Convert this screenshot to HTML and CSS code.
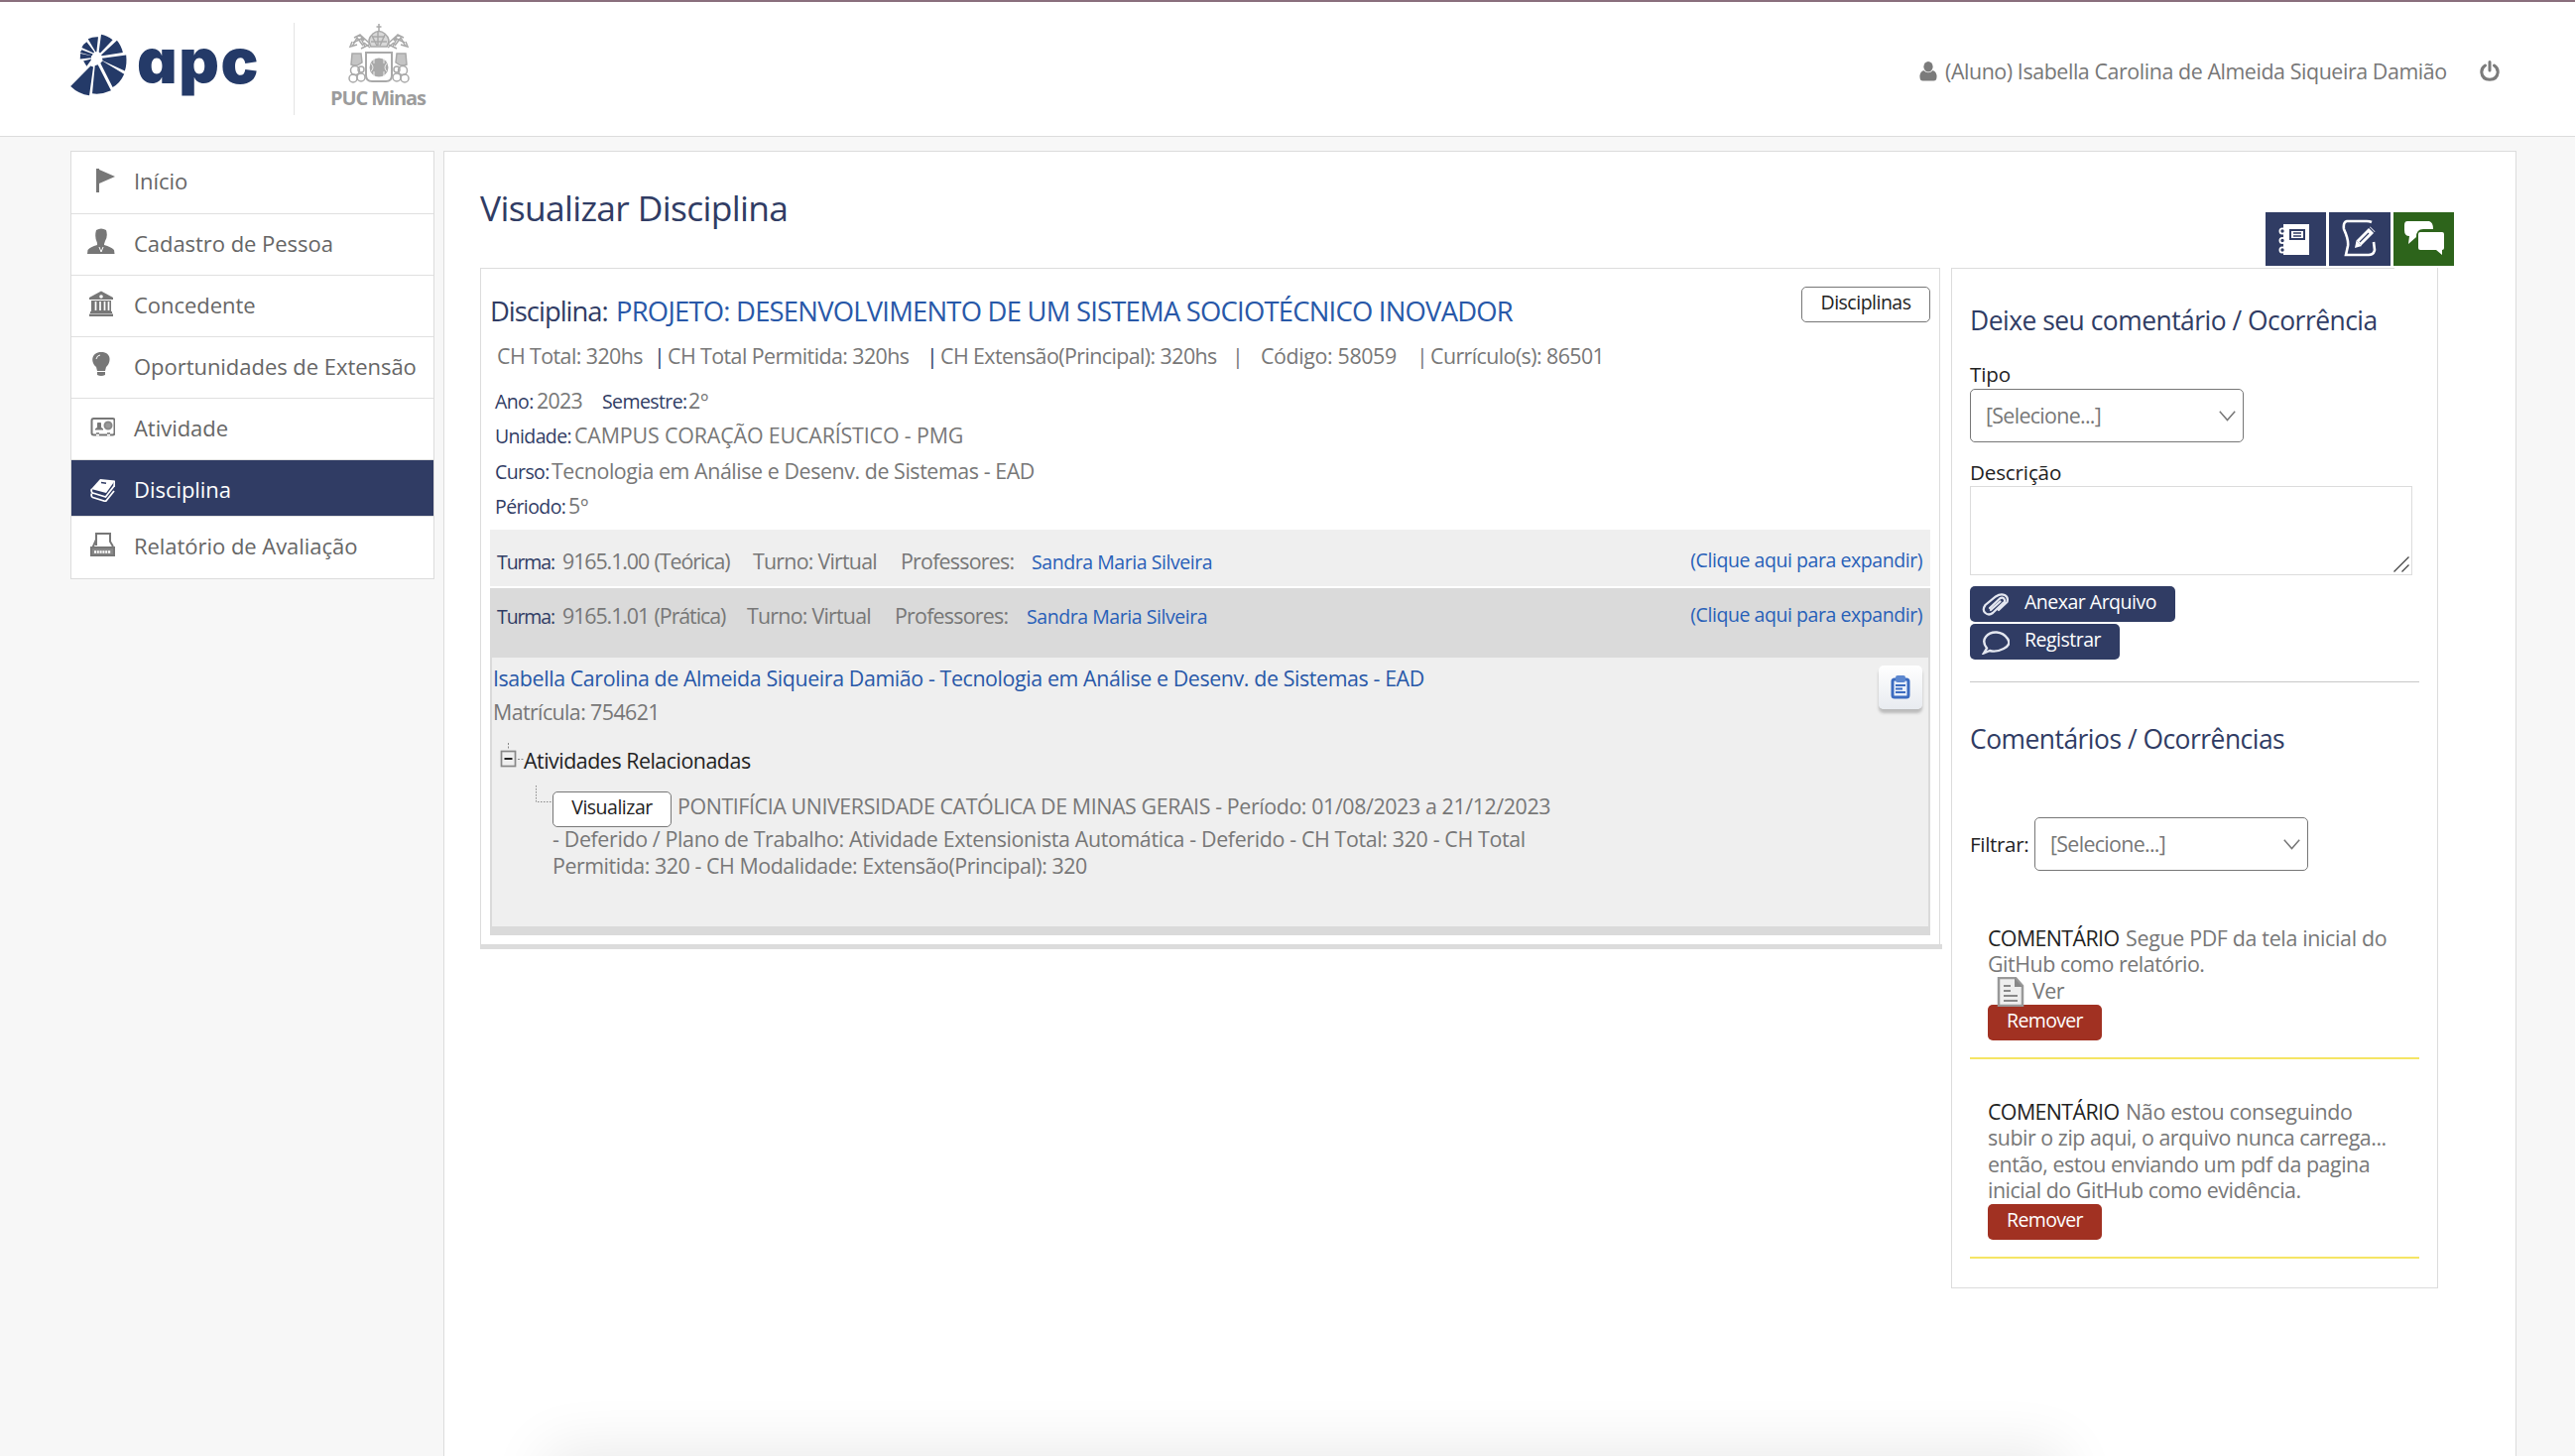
FILE: index.html
```html
<!DOCTYPE html>
<html lang="pt-BR">
<head>
<meta charset="utf-8">
<title>APC - Visualizar Disciplina</title>
<link rel="stylesheet" href="styles.css">
</head>
<body>
<header class="topbar">
  <svg class="fan" viewBox="210 103 177 190"><path d="M213 263L274 201L282 204L270 291Q238 287 213 263ZM279 285L287 200L296 197L336 276Q308 289 279 285ZM341 266L304 193L310 186L376 226Q364 253 341 266ZM309 178L382 168Q385 196 378 216L311 185ZM306 168L354 123Q367 138 372 160L309 170ZM299 158L306 105Q325 108 341 122L303 162ZM289 158L266 119Q280 112 297 113L292 158ZM283 162L247 145Q252 134 262 128L285 158ZM278 170L242 160L247 152L281 165ZM276 176L242 180L243 163L276 170ZM275 184L262 202L252 186L276 180Z"/></svg>
  <span class="apc">apc</span>
  <div class="crest">
    <svg width="64" height="62" viewBox="0 0 64 62" fill="none" stroke="#a9a9a9" stroke-width="1.5"><path d="M32 1v8M29.500 4h5"/><path d="M24 24Q19 17 26 11Q32 6 38 11Q45 17 40 24Z" fill="#d8d8d8"/><path d="M25 13l5 10M31 9v14M38 12l-5 11M24 19h16M26 14h12"/><path d="M7 15l6-3 4 6M13 12l10 9M17 20l6 5M10 22L3 24l2-5M6 20l8-4 4 8M57 15l-6-3-4 6M51 12l-10 9M47 20l-6 5M54 22l7 2-2-5M58 20l-8-4-4 8"/><path d="M5 24l5-9 6 8M14 26l8-4M59 24l-5-9-6 8M50 26l-8-4"/><path d="M19 30h26v23q0 6-6 6H25q-6 0-6-6Z" stroke-width="2"/><circle cx="32" cy="45" r="9.500" fill="#a9a9a9" stroke="none"/><path d="M27 36v5M27 49v5M37 36v5M37 49v5M24 41q4 4 0 8M40 41q-4 4 0 8" stroke="#eee" stroke-width="1"/><path d="M5 31h9l1 9q-6 5-11 2ZM59 31h-9l-1 9q6 5 11 2Z" fill="#c4c4c4"/><circle cx="8" cy="48" r="4.500"/><circle cx="6" cy="56" r="4"/><circle cx="14" cy="55" r="4"/><circle cx="14" cy="47" r="3"/><circle cx="56" cy="48" r="4.500"/><circle cx="58" cy="56" r="4"/><circle cx="50" cy="55" r="4"/><circle cx="50" cy="47" r="3"/></svg>
    <span class="puc">PUC Minas</span>
  </div>
  <div class="user">
    <svg class="user-icon" width="18" height="20" viewBox="0 0 18 20" fill="#7b7b7b"><ellipse cx="9" cy="5.200" rx="4.600" ry="5.200"/><path d="M4.300 9Q9 13.500 13.700 9Q17.800 10.500 17.500 16Q17.300 19.500 14.500 19.500H3.500Q.7 19.500.5 16Q.2 10.500 4.300 9Z"/></svg>
    <span class="user-name">(Aluno) Isabella Carolina de Almeida Siqueira Damião</span>
    <svg class="power" width="20" height="21" viewBox="0 0 20 21" fill="none" stroke="#7b7b7b" stroke-width="3" stroke-linecap="round"><path d="M5.500 5Q1.500 7.500 1.800 12Q2.500 19 10 19.300Q17.500 19 18.200 12Q18.500 7.500 14.500 5M10 1.500v8.500"/></svg>
  </div>
</header>
<div class="page">
<nav class="menu">
  <a class="item"><svg class="ico" viewBox="0 0 28 28"><path d="M9 3h3v24H9ZM12 4l16 7-16 7Z"/></svg><span>Início</span></a>
  <a class="item"><svg class="ico" viewBox="0 0 28 28"><path d="M9 2q5-3 10 0q2 6-1 11l-1 3v1q7 2 10 5l.5 4H0l.5-4Q3 19 10 17v-2Q7 9 9 2Z"/><path d="M12 19l2 5 2-5" fill="none" stroke="#fff"/></svg><span>Cadastro de Pessoa</span></a>
  <a class="item"><svg class="ico" viewBox="0 0 28 28"><path d="M2 8L14 1.500 26 8v2H2ZM4 11h20v11H4ZM3 22h22v2H3ZM2 24.500h24V27H2Z"/><path d="M8.500 12v9M13 12v9M17.500 12v9M21.500 12v9" stroke="#fff" stroke-width="1.700"/><circle cx="14" cy="7" r="1.800" fill="#fff"/></svg><span>Concedente</span></a>
  <a class="item"><svg class="ico" viewBox="0 0 28 28"><path d="M14 1c11 0 10 11 5 15l-1 4h-8l-1-4C3 11 4 1 14 1ZM10 21h8v3q-4 2-8 0Z"/><path d="M9 8q1-4 4-4" stroke="#fff" fill="none"/></svg><span>Oportunidades de Extensão</span></a>
  <a class="item"><svg class="ico line" viewBox="0 0 28 28"><rect x="4.500" y="6" width="23" height="16.500" rx="2"/><path d="M9 22.500h3M20 22.500h3" stroke="#fff"/><path d="M9 21h3M20 21h3" stroke-width="1.500"/><path d="M8 17h8l-2.500-2v-4.500h-3V15ZM12 11v5" fill="#777" stroke-width="1"/><circle cx="21" cy="13" r="3.500" fill="#999" stroke="#888"/></svg><span>Atividade</span></a>
  <a class="item active"><svg class="ico" viewBox="0 0 28 28"><path d="M13 5l15 1.500-9 12.500L4 15Z" fill="#fff"/><path d="M14 8.500l5 .7" stroke="#303c64" stroke-width="1.500"/><path d="M4.500 15q-1 3 1 4l13 4L27 12M4.500 19.500q-1 3 1 4l13 4L27 17M27.500 7l-.5 6" fill="none" stroke="#fff" stroke-width="1.800"/></svg><span>Disciplina</span></a>
  <a class="item"><svg class="ico line" viewBox="0 0 28 28"><path d="M9 15V3h14v8l3 5M9 9l-4 9h22" /><path d="M4 17h23v8H4Z" fill="#888"/><path d="M7 21.500h17" stroke="#fff" stroke-width="2.500" stroke-dasharray="2 .8"/></svg><span>Relatório de Avaliação</span></a>
</nav>
<main class="main">
  <section class="left">
    <h1>Visualizar Disciplina</h1>
    <div class="panel">
      <div class="panel-head">
        <span class="label-lg">Disciplina:</span>
        <a class="course">PROJETO: DESENVOLVIMENTO DE UM SISTEMA SOCIOTÉCNICO INOVADOR</a>
        <button class="btn btn-disc">Disciplinas</button>
      </div>
      <div class="hours"><span>CH Total: 320hs</span><i class="navy">|</i><span>CH Total Permitida: 320hs</span><i class="navy">|</i><span>CH Extensão(Principal): 320hs</span><i>|</i><span class="code">Código: 58059</span><i>|</i><span>Currículo(s): 86501</span></div>
      <dl class="info">
        <div class="r1"><dt>Ano:</dt><dd class="year">2023</dd><dt>Semestre:</dt><dd class="ord">2º</dd></div>
        <div class="r2"><dt>Unidade:</dt><dd class="campus">CAMPUS CORAÇÃO EUCARÍSTICO - PMG</dd></div>
        <div class="r3"><dt>Curso:</dt><dd>Tecnologia em Análise e Desenv. de Sistemas - EAD</dd></div>
        <div class="r4"><dt>Périodo:</dt><dd class="ord">5º</dd></div>
      </dl>
      <div class="turma t1"><b>Turma:</b><span class="class-code">9165.1.00 (Teórica)</span><span>Turno: Virtual</span><span>Professores:</span><a>Sandra Maria Silveira</a><a class="expand">(Clique aqui para expandir)</a></div>
      <div class="group">
        <div class="turma t2"><b>Turma:</b><span class="class-code">9165.1.01 (Prática)</span><span>Turno: Virtual</span><span>Professores:</span><a>Sandra Maria Silveira</a><a class="expand">(Clique aqui para expandir)</a></div>
        <div class="student">
          <div class="who">
            <div class="who-text"><a>Isabella Carolina de Almeida Siqueira Damião - Tecnologia em Análise e Desenv. de Sistemas - EAD</a><span>Matrícula: 754621</span></div>
            <button class="clip"><svg width="20" height="24" viewBox="0 0 20 24"><rect x="2" y="4" width="16" height="18" rx="2" fill="#e8effa" stroke="#3c6cc0" stroke-width="3"/><rect x="5" y="0" width="10" height="7" rx="2" fill="#5c87cf"/><path d="M5 10h10M5 13.500h7M5 17h10" stroke="#3c6cc0" stroke-width="1.800"/></svg></button>
          </div>
          <div class="tree">
            <div class="node"><svg width="24" height="26" viewBox="0 0 24 26" fill="none" stroke="#888"><path d="M8.500 0v7M18 16.500h6" stroke-dasharray="2 1.500"/><rect x="1.500" y="8.500" width="14" height="15" stroke-width="1.700"/><path d="M4.500 16h8" stroke="#222" stroke-width="2"/></svg><span>Atividades Relacionadas</span></div>
            <div class="leaf"><svg width="17" height="18" viewBox="0 0 17 18" fill="none" stroke="#888"><path d="M.5 0v16.500H17" stroke-dasharray="1.500 1.500"/></svg>
              <div class="leaf-text"><div class="l1"><button class="btn btn-vis">Visualizar</button><span>PONTIFÍCIA UNIVERSIDADE CATÓLICA DE MINAS GERAIS - Período: 01/08/2023 a 21/12/2023</span></div><div class="l2"><span>- Deferido / Plano de Trabalho: Atividade Extensionista Automática - Deferido - CH Total: 320 - CH Total</span></div><div class="l3"><span>Permitida: 320 - CH Modalidade: Extensão(Principal): 320</span></div></div>
            </div>
          </div>
        </div>
      </div>
    </div>
    <div class="panel-foot"></div>
  </section>
  <aside class="right">
    <div class="tabs">
      <a class="tab"><svg width="61" height="54" viewBox="0 0 61 54"><path d="M18 12h26v31H18Z" fill="#fff"/><rect x="25" y="18" width="14" height="9" fill="#fff" stroke="#303c64" stroke-width="2"/><path d="M28 21h8M28 24h8" stroke="#303c64" stroke-width="1.300"/><g fill="#303c64" stroke="#fff" stroke-width="1.800"><circle cx="17" cy="19" r="2.600"/><circle cx="17" cy="28.500" r="2.600"/><circle cx="17" cy="38" r="2.600"/></g></svg></a>
      <a class="tab mid"><svg width="62" height="54" viewBox="0 0 62 54" fill="none" stroke="#fff" stroke-width="2.600"><path d="M43 10q-2-1-5-1H18q-4 1-3 8q5 11 4 17l-2 9h23q5 0 6-5l-1-8"/><path d="M30 31l14-14" stroke-width="7"/><path d="M40 15l6 6M31 30l9-9" stroke="#303c64" stroke-width="1.200"/><path d="M26 36l1.500-7.500 5.500 5.500Z" fill="#fff" stroke="none"/></svg></a>
      <a class="tab green"><svg width="61" height="54" viewBox="0 0 61 54" fill="#fff"><path d="M14 9h22q4 1 4 8H30q-7 0-7 8l-8 7 1-8q-5 0-5-6v-5q0-4 3-4Z"/><path d="M27 20h22q2 0 2 2v14q0 2-2 2v5l-6-5H27q-2 0-2-2V22q0-2 2-2Z"/></svg></a>
    </div>
    <div class="side">
      <h2>Deixe seu comentário / Ocorrência</h2>
      <label class="f1">Tipo</label>
      <div class="select"><span>[Selecione...]</span><svg width="17" height="11" viewBox="0 0 17 11" fill="none" stroke="#777" stroke-width="1.500"><path d="M.8.8l7.700 8.700L16.200.8"/></svg></div>
      <label class="f2">Descrição</label>
      <div class="textarea"><svg width="16" height="16" viewBox="0 0 16 16" stroke="#444" stroke-width="1.300"><path d="M.5 15.500l15-15M8.500 15.500l7-7"/></svg></div>
      <button class="nbtn anexar"><svg width="28" height="24" viewBox="0 0 28 24" fill="none" stroke="#e4e7f0" stroke-width="2.200" stroke-linecap="round"><path d="M8 15L18 5.500q3-2 4.500.5t-1 4L11 20q-4 3-7.500 0t0-8L14 3.500q5-3.500 9-1.500t2.500 7L17 17M18.500 8.500L9 17"/></svg><span>Anexar Arquivo</span></button>
      <button class="nbtn registrar"><svg width="28" height="24" viewBox="0 0 28 24" fill="none" stroke="#e4e7f0" stroke-width="2.400"><path d="M2 22.500l3-5Q0 11 4 6T15 1.500t11 6.500-4 10-14 2Z"/></svg><span>Registrar</span></button>
      <hr>
      <h2 class="h2b">Comentários / Ocorrências</h2>
      <div class="filter"><label>Filtrar:</label><div class="select"><span>[Selecione...]</span><svg width="17" height="11" viewBox="0 0 17 11" fill="none" stroke="#777" stroke-width="1.500"><path d="M.8.8l7.700 8.700L16.200.8"/></svg></div></div>
      <article class="comment c1">
        <p><b>COMENTÁRIO</b> <span>Segue PDF da tela inicial do</span><br><span>GitHub como relatório.</span></p>
        <div class="ver"><svg width="28" height="30" viewBox="0 0 28 30"><path d="M2 1h17l7 8v20H2Z" fill="#eee" stroke="#999" stroke-width="2.500"/><path d="M18 1v9h8Z" fill="#888"/><path d="M7 9h7M7 14h7M7 19h14M7 24h14" stroke="#888" stroke-width="2.200"/></svg><span>Ver</span></div>
        <button class="rem">Remover</button>
      </article>
      <article class="comment c2">
        <p><b>COMENTÁRIO</b> <span>Não estou conseguindo</span><br><span>subir o zip aqui, o arquivo nunca carrega...</span><br><span>então, estou enviando um pdf da pagina</span><br><span>inicial do GitHub como evidência.</span></p>
        <button class="rem">Remover</button>
      </article>
    </div>
  </aside>
</main>
</div>
<div class="glow"></div>
</body>
</html>
```
FILE: styles.css
```css
* { box-sizing: border-box; }
html { overflow: hidden; }
body {
  margin: 0;
  height: 1468px;
  overflow: hidden;
  position: relative;
  border-top: 2px solid #8a6f7d;
  background: #f7f7f7;
  font-family: "Open Sans", "Noto Sans", sans-serif;
  font-size: 21.4px;
  line-height: 30px;
  letter-spacing: -.43px;
  color: #777;
}
h1, h2, p, dl, dd, hr { margin: 0; font-weight: 400; }
b, i { font-weight: 400; font-style: normal; }
span, a, dt, dd, label { white-space: nowrap; }
svg { display: block; flex: none; }
button { font: inherit; font-size: 19.5px; letter-spacing: -.5px; padding: 0; margin: 0; }

/* Header */
.topbar {
  display: flex;
  align-items: flex-start;
  height: 136px;
  background: #fff;
  border-bottom: 1px solid #dcdcdc;
  padding-left: 70px;
}
.fan { width: 59px; height: 63px; margin-top: 32px; fill: #243a68; }
.apc {
  width: 158px;
  margin: 23px 0 0 9px;
  height: 72px;
  font: 900 63px/72px Inter, sans-serif;
  font-feature-settings: "cv11";
  letter-spacing: 1.6px;
  color: #243a68;
}
.crest {
  display: flex;
  flex-direction: column;
  height: 93px;
  margin-top: 21px;
  padding-left: 36px;
  border-left: 1px solid #e4e4e4;
}
.crest svg { margin-left: 17px; }
.puc { font-weight: 700; font-size: 20px; line-height: 28px; letter-spacing: -1.1px; color: #9c9c9c; }
.user { display: flex; margin: 54px 76px 0 auto; }
.user-icon { margin: 6px 8px 0 0; }
.user-name { width: 539px; margin-top: 1px; letter-spacing: -.42px; }
.power { margin-top: 5px; }

/* Sidebar menu */
.page { display: flex; padding-left: 71px; height: 1330px; overflow: hidden; }
.menu {
  width: 367px;
  height: 432px;
  margin-top: 14px;
  border: 1px solid #dcdcdc;
  background: #fff;
  color: #666;
  font-size: 22px;
  letter-spacing: -.04px;
}
.item { display: flex; height: 62px; padding: 14px 0 0 16px; border-bottom: 1px solid #e0e0e0; }
.item:first-child { height: 63px; }
.item:last-child { border: 0; }
.item.active { height: 57px; background: #303c64; color: #fff; }
.ico { width: 28px; height: 28px; margin-right: 19px; fill: #777; }
.ico.line { fill: none; stroke: #777; stroke-width: 2; }

/* Discipline panel */
.main {
  display: grid;
  grid-template-columns: 1474px 507px;
  column-gap: 9px;
  width: 2090px;
  height: 1400px;
  margin: 14px 0 0 9px;
  padding-left: 36px;
  border: 1px solid #dcdcdc;
  background: #fff;
  align-items: start;
}
h1 { margin: 31px 0 36px; font-size: 35.4px; line-height: 50px; letter-spacing: -.67px; color: #303c64; }
.panel { width: 1472px; height: 682px; border: 1px solid #dcdcdc; border-bottom: 0; padding: 0 9px; }
.panel-foot { height: 5px; background: #dcdcdc; }
.panel-head { display: flex; height: 73px; padding-top: 23px; font-size: 27.4px; line-height: 40px; color: #303c64; }
.label-lg { width: 127px; letter-spacing: -1px; }
.course { color: #2858a8; letter-spacing: -.77px; }
.btn { height: 36px; border: 1px solid #777; border-radius: 5px; background: #fff; color: #222; line-height: 28px; padding-bottom: 4px; }
.btn-disc { width: 130px; margin: -5px 0 0 auto; }
.hours { display: grid; grid-template-columns: 158px 14px 261px 14px 294px 29px 157px 14px auto; height: 34px; padding-left: 7px; letter-spacing: -.58px; }
.hours .code { letter-spacing: -.37px; }
.navy { color: #303c64; }
.info { padding-left: 5px; }
.info div { display: grid; align-items: baseline; height: 35px; }
.info dt { font-size: 19.5px; letter-spacing: -.6px; color: #303c64; }
.info .year { letter-spacing: -.7px; }
.info .ord { letter-spacing: .1px; }
.info .campus { letter-spacing: -.15px; }
.info .r1 { grid-template-columns: 42px 66px 87px auto; margin-top: 11px; }
.info .r2 { grid-template-columns: 80px auto; height: 36px; }
.info .r3 { grid-template-columns: 57px auto; }
.info .r4 { grid-template-columns: 74px auto; height: 39px; }
.turma { display: grid; align-items: baseline; padding-left: 7px; letter-spacing: -.77px; }
.turma b { color: #303c64; font-size: 19.5px; letter-spacing: -1.1px; }
.turma .class-code { letter-spacing: -1.08px; word-spacing: 1px; }
.turma a { color: #2860b8; font-size: 19.5px; letter-spacing: -.44px; }
.turma .expand { justify-self: end; margin-right: 8px; position: relative; top: -2px; }
.t1 { grid-template-columns: 66px 192px 149px 132px auto 1fr; height: 57px; padding-top: 17px; background: #efefef; margin-bottom: 2px; }
.t2 { grid-template-columns: 66px 186px 149px 133px auto 1fr; height: 70px; padding-top: 13px; }
.group { height: 350px; background: #dadada; }
.student { height: 271px; margin: 0 2px; background: #efefef; padding: 4px 0 0 1px; }
.who { display: flex; justify-content: space-between; height: 78px; }
.who-text { display: flex; flex-direction: column; line-height: 34px; }
.who-text a { color: #2858a8; letter-spacing: -.4px; }
.who-text span { letter-spacing: -.6px; }
.clip { width: 44px; height: 44px; margin: 4px 6px 0 0; border: 0; border-radius: 5px; background: linear-gradient(#fff, #e8ebf0); box-shadow: 0 4px 3px #bbb; display: grid; place-items: center; }
.node { display: flex; margin-left: 7px; height: 50px; color: #222; letter-spacing: -.48px; }
.node svg { margin-top: 4px; }
.node span { margin-top: 7px; }
.leaf { display: flex; margin-left: 43px; }
.leaf > svg { margin-top: -3px; }
.leaf-text { line-height: 27px; letter-spacing: -.4px; }
.l1 { display: flex; gap: 6px; height: 38px; padding-top: 3px; line-height: 29px; }
.btn-vis { width: 120px; }
.l2 { margin-top: -1px; }
.l2 span { letter-spacing: -.36px; }
.l3 span { letter-spacing: -.45px; }

/* Comments column */
.right { margin-top: 61px; }
.tabs { display: flex; justify-content: flex-end; gap: 3px; height: 56px; }
.tab { width: 61px; height: 54px; background: #303c64; }
.mid { width: 62px; }
.green { background: #2d641b; }
.side { width: 491px; height: 1029px; border: 1px solid #dcdcdc; border-top: 0; padding: 0 18px; display: flex; flex-direction: column; align-items: flex-start; }
.side::before { content: ""; width: 446px; height: 1px; margin-left: -18px; background: #dcdcdc; flex: none; }
h2 { font-size: 26.4px; line-height: 40px; letter-spacing: -.49px; color: #303c64; margin-top: 32px; }
label { font-size: 20.6px; line-height: 28px; letter-spacing: -.15px; color: #222; }
.f1 { margin: 20px 0 1px; }
.select { display: flex; justify-content: space-between; align-items: center; width: 276px; height: 54px; padding: 0 7px 0 15px; border: 1px solid #777; border-radius: 5px; flex: none; letter-spacing: -.68px; }
.f2 { margin-top: 16px; height: 28px; }
.textarea { display: flex; justify-content: flex-end; align-items: flex-end; width: 446px; height: 90px; padding: 2px; border: 1px solid #dcdcdc; margin-bottom: 11px; flex: none; }
.nbtn { display: flex; height: 36px; border: 0; border-radius: 5px; background: #303c64; color: #fff; line-height: 31px; margin-bottom: 2px; padding-left: 12px; flex: none; }
.nbtn svg { margin: 7px 15px 0 0; }
.anexar { width: 207px; }
.registrar { width: 151px; }
hr { width: 453px; height: 1px; border: 0; background: #c8c8c8; margin-top: 20px; flex: none; }
.h2b { margin-top: 37px; }
.filter { display: flex; align-items: center; margin: 59px 0 54px; }
.filter label { width: 65px; letter-spacing: -.35px; }
.comment { width: 453px; padding-left: 18px; border-bottom: 2px solid #f5e565; letter-spacing: -.46px; }
.comment p { line-height: 26.3px; white-space: nowrap; height: 53px; padding-top: 1px; }
.comment b { color: #222; letter-spacing: -.6px; margin-right: 1.5px; }
.comment b + span { letter-spacing: -.33px; }
.c1 { height: 136px; }
.c2 { height: 162px; margin-top: 39px; }
.c2 p { height: 107px; }
.ver { display: flex; height: 28px; margin-left: 9px; line-height: 27px; gap: 8px; }
.rem { display: block; width: 115px; height: 36px; border: 0; border-radius: 5px; background: #a13122; color: #fff; line-height: 28px; letter-spacing: -.65px; padding-bottom: 4px; }

.glow { position: absolute; left: 560px; top: 1470px; width: 1510px; height: 60px; box-shadow: 0 0 60px 10px rgba(0, 0, 0, .09); }
```
